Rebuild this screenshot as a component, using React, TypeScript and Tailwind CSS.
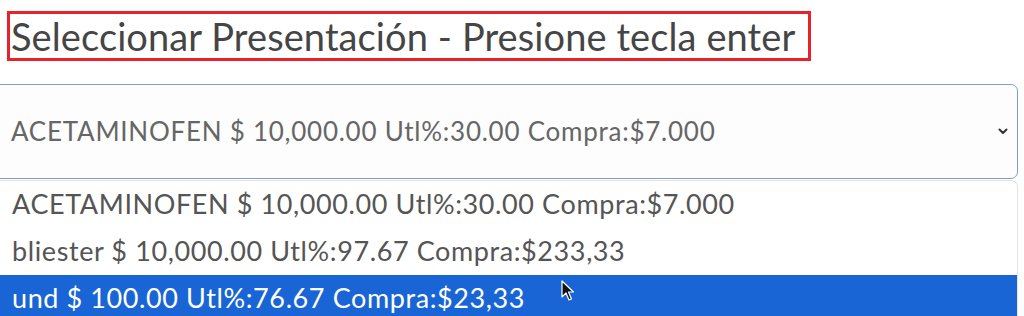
import React from 'react';

const options = [
  'ACETAMINOFEN $ 10,000.00 Utl%:30.00 Compra:$7.000',
  'bliester $ 10,000.00 Utl%:97.67 Compra:$233,33',
  'und $ 100.00 Utl%:76.67 Compra:$23,33',
];

const font = { fontFamily: 'Lato, "Noto Sans", sans-serif' };

const App: React.FC = () => {
  const selected = 2;

  return (
    <div className="w-[1024px] h-[316px] bg-white overflow-hidden" style={font}>
      {/* Title highlighted with red frame */}
      <div className="pt-[11px] pl-[7px]">
        <div className="w-[804px] h-[50px] border-[3px] border-[#e8222b] flex items-center pl-[1px]">
          <span className="text-[38px] leading-none text-[#454545] whitespace-nowrap tracking-[0.1px]">
            Seleccionar Presentación - Presione tecla enter
          </span>
        </div>
      </div>

      {/* Select box */}
      <div className="relative mt-[23px] -ml-[2px] w-[1020px]">
        <div className="h-[95px] border-[1.5px] border-[#7e9dcf] rounded-r-[7px] bg-[#fdfdfd] flex items-center pl-[12px] pr-[9px]">
          <span className="flex-1 text-[26px] tracking-[0.75px] text-[#666] whitespace-nowrap">{options[0]}</span>
          <svg width="10" height="7" viewBox="0 0 10 7">
            <path d="M1.5 1.5 L5 5 L8.5 1.5" fill="none" stroke="#333" strokeWidth="2" strokeLinecap="round" strokeLinejoin="round" />
          </svg>
        </div>

        {/* Open option list */}
        <div className="relative mt-[1px] flex">
          <div className="w-[1020px] bg-white rounded-tr-[7px] border-r border-t border-[#e4e4e4]">
            {options.map((opt, idx) => (
              <div
                key={idx}
                className={`h-[47px] flex items-center pl-[14px] text-[27px] tracking-[0.6px] whitespace-nowrap ${
                  idx === selected ? 'bg-[#1965d6] text-white' : 'text-[#555]'
                }`}
              >
                {opt}
              </div>
            ))}
          </div>
          <div className="flex-1 flex flex-col">
            <div className="h-[70px] bg-white" />
            <div className="flex-1 bg-[#8d8d8d]" />
          </div>

          {/* Mouse pointer */}
          <svg
            width="14"
            height="22"
            viewBox="0 0 14 22"
            className="absolute left-[563px] top-[100px]"
          >
            <path
              d="M1 1 L1 17 L5 13 L8 20 L10.5 19 L7.5 12 L12.5 12 Z"
              fill="#111"
              stroke="#fff"
              strokeWidth="1.2"
              strokeLinejoin="round"
            />
          </svg>
        </div>
      </div>
    </div>
  );
};

export default App;
